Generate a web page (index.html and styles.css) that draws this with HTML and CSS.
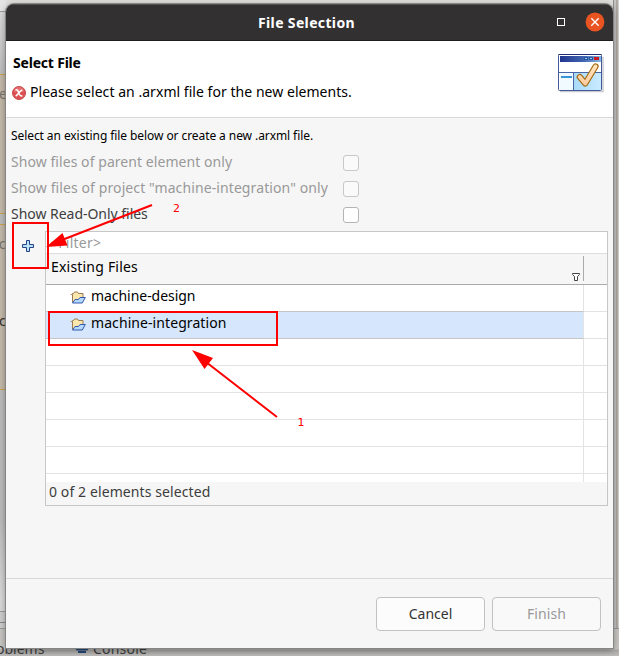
FILE: index.html
```html
<!DOCTYPE html>
<html lang="en">
<head>
<meta charset="utf-8">
<title>File Selection</title>
<link rel="stylesheet" href="styles.css">
</head>
<body>
<div class="desktop">
  <div class="editor-left">
    <div class="blank-top"></div>
    <div class="node node-a"><span>te</span></div>
    <div class="gap-band"></div>
    <div class="node node-b"><span class="frag-ac">ac</span><span class="frag-ec">ec</span></div>
    <div class="canvas-rest"></div>
  </div>
  <div class="view-tabs">
    <span class="tab-problems">oblems</span>
    <svg class="console-icon" width="14" height="14" viewBox="0 0 14 14"><rect x="1.5" y="1.5" width="11" height="8" rx="1" fill="#7b9cc8" stroke="#254878" stroke-width="2"/><path d="M3 12h8" stroke="#254878" stroke-width="2"/></svg>
    <span class="tab-console">Console</span>
  </div>
  <div class="editor-right"></div>

  <main class="dialog">
    <header class="titlebar">
      <h1>File Selection</h1>
      <div class="window-buttons">
        <span class="maximize"></span>
        <svg width="20" height="20" viewBox="0 0 20 20"><circle cx="10" cy="10" r="9.4" fill="#e95420"/><path d="M6.3 6.3l7.4 7.4M13.7 6.3l-7.4 7.4" stroke="#fff" stroke-width="1.4"/></svg>
      </div>
    </header>

    <section class="banner">
      <div>
        <h2>Select File</h2>
        <p class="error">
          <svg width="14" height="14" viewBox="0 0 14 14"><circle cx="7" cy="7" r="6.5" fill="#dc5052" stroke="#c9484c"/><path d="M2 6a5 5 0 0 1 10 0z" fill="#e98283" opacity=".6"/><path d="M3.4 4.1c2-.8 2.4 0 3.2 2.3.9 2.8 1.5 4 3.8 3.4M10.3 3.9C8.4 4.5 5.7 8.7 3.7 10.1" fill="none" stroke="#fff" stroke-width="1.5"/></svg>
          <span>Please select an .arxml file for the new elements.</span>
        </p>
      </div>
      <svg class="wizard-icon" width="48" height="42" viewBox="0 0 48 42">
        <defs>
          <linearGradient id="bar"><stop stop-color="#20368f"/><stop offset=".55" stop-color="#3e62af"/><stop offset="1" stop-color="#83b7e8"/></linearGradient>
          <linearGradient id="tick" x2="0" y2="1"><stop stop-color="#ffe5bd"/><stop offset="1" stop-color="#ffcba0"/></linearGradient>
          <linearGradient id="pane"><stop stop-color="#a8daf8"/><stop offset="1" stop-color="#c9ebff"/></linearGradient>
        </defs>
        <path d="M3 38.500h43V4" fill="none" stroke="#cbcbcf" stroke-width="1.500"/>
        <rect x="1.500" y="1.500" width="43" height="36" rx="1" fill="#fff" stroke="#425a9c"/>
        <path d="M1.500 1.500h43" stroke="#202e78"/>
        <path d="M3 3h41v6H3z" fill="url(#bar)"/>
        <path d="M27 4h4v3h-4zM32 4h4v3h-4z" fill="#2456a0"/><path d="M28 5.500h2M33 5.500h2" stroke="#a5c8ee"/>
        <path d="M37 4h5v3h-5z" fill="#c81826"/>
        <path d="M3 20h13v17H3z" fill="#f1faff"/><path d="M17 20h27v17H17z" fill="url(#pane)"/>
        <path d="M2 19.500h42M16.500 20v17" stroke="#4765a5"/>
        <path d="M4 24h11" stroke="#3995d6" stroke-width="2"/>
        <path d="M22.800 24l5.500 6.500L38.500 13.500" fill="none" stroke="#a16c15" stroke-width="6.200" stroke-linecap="round" stroke-linejoin="round"/>
        <path d="M22.800 24l5.500 6.500L38.500 13.500" fill="none" stroke="url(#tick)" stroke-width="3.800" stroke-linecap="round" stroke-linejoin="round"/>
      </svg>
    </section>

    <section class="content">
      <p class="hint">Select an existing file below or create a new .arxml file.</p>
      <label class="option disabled"><span class="t-parent">Show files of parent element only</span><i class="checkbox"></i></label>
      <label class="option disabled"><span class="t-project">Show files of project "machine-integration" only</span><i class="checkbox"></i></label>
      <label class="option"><span class="t-readonly">Show Read-Only files</span><i class="checkbox"></i></label>

      <div class="file-area">
        <div class="tools">
          <svg width="12" height="12" viewBox="0 0 12 12"><path d="M4.500.5h3v4h4v3h-4v4h-3v-4h-4v-3h4z" fill="#a6dcf5" stroke="#2b4186"/><path d="M6 2v8M2 6h8" stroke="#c9ecfa"/></svg>
        </div>
        <div class="table">
          <div class="filter"><span>&lt;Filter&gt;</span></div>
          <div class="thead">
            <span class="t-existing">Existing Files</span>
            <svg class="funnel" width="8" height="8" viewBox="0 0 8 8"><path d="M.5.500h7v1l-2 2v4h-3v-4l-2-2z" fill="#fff" stroke="#424242"/></svg>
            <span class="divider"></span>
          </div>
          <div class="rows">
            <div class="row"><div class="cell">
              <svg class="folder" width="16" height="13" viewBox="0 0 16 13"><path d="M2.500 11.500V2.500h1l1-1.500h3l1 1.500h4.500V6" fill="#fbe6ac" stroke="#9b7a56"/><path d="M.5 3.500h2" stroke="#b3946b"/><path d="M2.500 12l2.500-3.500h3.500l1.500-2h5.300l-3 5.500z" fill="#b5d9fb" stroke="#3559ad"/></svg>
              <span class="t-design">machine-design</span></div><div class="spare"></div></div>
            <div class="row selected"><div class="cell">
              <svg class="folder" width="16" height="13" viewBox="0 0 16 13"><path d="M2.500 11.500V2.500h1l1-1.500h3l1 1.500h4.500V6" fill="#fbe6ac" stroke="#9b7a56"/><path d="M.5 3.500h2" stroke="#b3946b"/><path d="M2.500 12l2.500-3.500h3.500l1.500-2h5.300l-3 5.500z" fill="#b5d9fb" stroke="#3559ad"/></svg>
              <span class="t-integration">machine-integration</span></div><div class="spare"></div></div>
            <div class="row"><div class="cell"></div><div class="spare"></div></div>
            <div class="row"><div class="cell"></div><div class="spare"></div></div>
            <div class="row"><div class="cell"></div><div class="spare"></div></div>
            <div class="row"><div class="cell"></div><div class="spare"></div></div>
            <div class="row"><div class="cell"></div><div class="spare"></div></div>
            <div class="row"><div class="cell"></div><div class="spare"></div></div>
          </div>
          <div class="status"><span>0 of 2 elements selected</span></div>
        </div>
      </div>
    </section>

    <footer class="actions">
      <button class="cancel">Cancel</button>
      <button class="finish" disabled>Finish</button>
    </footer>
  </main>

  <svg class="annotations" width="619" height="656" viewBox="0 0 619 656">
    <g fill="none" stroke="#f00" stroke-width="2">
      <rect x="13" y="223" width="35" height="45"/>
      <rect x="49" y="312" width="228" height="33"/>
      <path d="M152 205L62 240M277 417L206 362"/>
    </g>
    <path d="M46 247l16.500-14 5 12.500zM192 350l21 8-8.500 11z" fill="#f00"/>
    <text x="173" y="212">2</text>
    <text x="297.500" y="426">1</text>
  </svg>
</div>
</body>
</html>
```
FILE: styles.css
```css
* { box-sizing: border-box; }

body {
  margin: 0;
  font: 14px/20px "Noto Sans", "Open Sans", sans-serif;
  color: #3d3d3d;
  overflow: hidden;
}

h1, h2, p { margin: 0; }
svg { display: block; flex: none; }
span { white-space: nowrap; }

.desktop {
  position: relative;
  width: 619px;
  height: 656px;
  padding: 4px 6px 8px;
  background: #dedddc;
  overflow: hidden;
}

/* window behind the dialog */
.editor-left {
  position: absolute;
  left: 0;
  top: 0;
  width: 6px;
  height: 628px;
  display: flex;
  flex-direction: column;
  overflow: hidden;
  color: #77736c;
}
.blank-top { height: 74px; background: linear-gradient(#e4e4e4 11px, #999 11px, #999 12px, #d9d9d9 12px, #bdbdbd); }
.node { background: #c2b9a9; border-top: 1px solid #c8a349; border-bottom: 1px solid #c8a349; }
.node-a { height: 140px; padding-top: 9px; }
.node-a span { display: block; margin-left: -6px; }
.gap-band { height: 10px; background: #bcbcbc; }
.node-b { height: 166px; padding-top: 9px; }
.node-b span { display: block; margin-left: -9px; }
.node-b .frag-ec { margin-top: 57px; color: #34302b; }
.canvas-rest { flex: 1; background: linear-gradient(#bbb 130px, #d8d8d8 210px, #d8d8d8 221px, #999 221px, #999 222px, #ccc 222px, #ccc 232px, #888 232px, #888 233px, #ccc 233px); }

.editor-right {
  position: absolute;
  right: 0;
  top: 0;
  width: 6px;
  height: 628px;
  background: linear-gradient(90deg, #8d8d8d 1px, #c5c3c1 1px, #c5c3c1 3px, #a9a19c 3px, #b6afaa 5px, #d0cecc 5px);
}

.view-tabs {
  position: absolute;
  left: 0;
  top: 628px;
  width: 619px;
  height: 28px;
  display: flex;
  align-items: flex-start;
  padding-top: 10px;
  background: linear-gradient(#c6c4c1 20px, #aaa8a5 21px, #bebcba);
  border-top: 1px solid #999;
}
.tab-problems { margin-left: -4px; width: 79px; }
.console-icon { margin-top: 1px; }
.tab-console { margin-left: 4px; letter-spacing: .2px; }

.dialog {
  position: relative;
  width: 607px;
  height: 644px;
  display: flex;
  flex-direction: column;
  background: #f6f6f6;
  border-radius: 8px 8px 0 0;
  box-shadow: 0 0 0 1px #858585, 0 2px 7px #0006;
  overflow: hidden;
}

.titlebar {
  height: 37px;
  display: grid;
  grid-template-columns: 1fr auto 1fr;
  align-items: center;
  background: #333031;
  border-top: 1px solid #555253;
  border-bottom: 1px solid #1e1c1d;
  color: #fff;
}
.titlebar h1 { grid-column: 2; font-size: 14px; line-height: 20px; margin-left: -6px; letter-spacing: .35px; }
.window-buttons { display: flex; justify-content: flex-end; align-items: center; gap: 20px; padding-right: 8px; }
.window-buttons svg { margin-top: -1px; }
.maximize { width: 8px; height: 8px; margin-top: -1px; border: 1px solid #fff; }

.banner {
  height: 77px;
  display: flex;
  justify-content: space-between;
  padding: 12px 8px 0 7px;
  background: #fff;
  border-bottom: 1px solid #d9d9d9;
  color: #000;
}
.banner h2 { font-size: 14px; line-height: 20px; letter-spacing: -.2px; }
.error { display: flex; align-items: center; gap: 4px; margin: 9px 0 0 -1px; letter-spacing: .04px; }
.error svg { margin-top: 1px; }

.content { flex: 1; padding: 8px 5px 0; }
.hint { height: 24px; line-height: 20px; font-size: 12px; color: #000; letter-spacing: -.08px; }
.option { height: 26px; display: flex; align-items: center; }
.option span { width: 332px; margin-top: -2px; }
.t-parent { letter-spacing: .06px; }
.t-project { letter-spacing: .1px; }
.t-readonly { letter-spacing: -.03px; }
.checkbox { width: 16px; height: 16px; background: #fff; border: 1px solid #b4b4b4; border-radius: 3px; }
.disabled { color: #999; }
.disabled .checkbox { background: #fafafa; border-color: #c8c8c8; }

.file-area { display: flex; margin-top: 3px; }
.tools { width: 34px; padding: 9px 0 0 11px; }
.table { width: 563px; height: 275px; display: flex; flex-direction: column; border: 1px solid #c7c7c7; background: #fff; }
.filter { height: 22px; padding-left: 4px; line-height: 22px; color: #999; letter-spacing: .25px; border-bottom: 1px solid #dedede; }
.thead { height: 31px; display: flex; align-items: flex-start; padding: 2px 23px 0 5px; background: #f6f6f6; border-bottom: 1px solid #aaa; color: #000; }
.t-existing { margin-top: 1px; letter-spacing: .2px; }
.funnel { margin: 17px 3px 0 auto; }
.divider { width: 1px; height: 25px; background: #aaa; }

.rows { height: 197px; overflow: hidden; }
.row { height: 27px; display: flex; }
.cell { width: 538px; display: flex; align-items: center; padding-left: 24px; border-right: 1px solid #e3e3e3; border-bottom: 1px solid #e3e3e3; color: #000; }
.cell span { margin: -5px 0 0 5px; }
.t-design { letter-spacing: -.05px; }
.t-integration { letter-spacing: .08px; }
.folder { margin-top: -1px; }
.spare { flex: 1; border-bottom: 1px solid #e3e3e3; }
.row:first-child .cell { border-bottom-color: #c5c5c5; }
.selected .cell { background: #d6e7fd; border-bottom-color: #c5c5c5; }
.status { flex: 1; padding-left: 3px; line-height: 20px; letter-spacing: .1px; background: #f6f6f6; }

.actions { height: 70px; display: flex; justify-content: flex-end; gap: 7px; padding: 18px 12px 0; border-top: 1px solid #d7d7d7; }
.actions button {
  width: 109px;
  height: 34px;
  padding: 0;
  font: inherit;
  color: #333;
  background: #fcfcfc;
  border: 1px solid #c2c2c2;
  border-radius: 4px;
}
.actions .finish { color: #999; background: #f9f9f9; letter-spacing: .1px; }

/* callouts drawn over the window */
.annotations { position: absolute; left: 0; top: 0; pointer-events: none; }
.annotations text { font: 11px "DejaVu Sans", sans-serif; fill: #f00; }
```
